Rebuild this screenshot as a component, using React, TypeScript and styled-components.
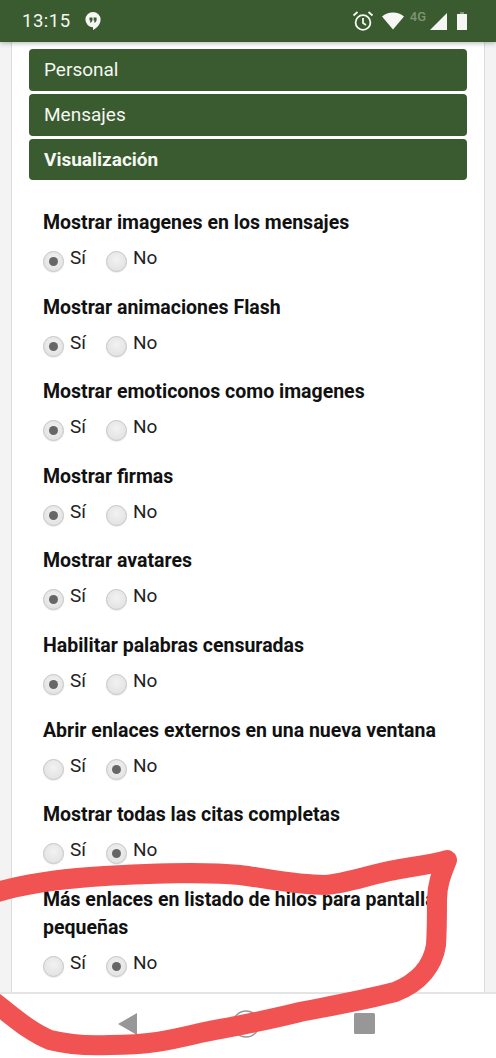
import React from "react";
import styled, { createGlobalStyle } from "styled-components";

const Global = createGlobalStyle`
  html, body { margin: 0; padding: 0; background: #fff; }
  #root { width: 496px; height: 1058px; }
`;
const Screen = styled.div`
  position: relative; width: 496px; height: 1058px; overflow: hidden;
  display: flex; flex-direction: column; background: #fff;
  font-family: Roboto, "Liberation Sans", sans-serif; color: #111;
`;
const StatusBar = styled.header`
  height: 42px; flex: none; background: #3a5a2f; display: flex; align-items: center;
  padding: 0 29px 0 22px; box-shadow: 0 1px 5px rgba(0,0,0,.3); position: relative; z-index: 1;
  color: #f4f6f2;
`;
const Clock = styled.span`
  font-size: 18.5px; font-weight: 400; letter-spacing: .5px; margin-right: 14px; line-height: 38px;
`;
const Spacer = styled.div`flex: 1;`;
const FourG = styled.span`
  font-size: 13px; font-weight: 500; color: #7f9576; margin: -8px 4px 0 6px; line-height: 14px;
`;
const Gutter = styled.main`
  flex: 1; background: #f3f3f3; padding: 0 11px; min-height: 0; overflow: hidden;
`;
const Panel = styled.div`
  height: 100%; box-sizing: border-box; background: #fff;
  border-left: 1px solid #dcdcdc; border-right: 1px solid #dcdcdc;
  padding: 7px 17px 0 17px;
`;
const Tabs = styled.nav`display: flex; flex-direction: column; gap: 3px;`;
const Tab = styled.div<{ $active?: boolean }>`
  height: ${p => (p.$active ? 41 : 42)}px; box-sizing: border-box; background: #3a5a2f; border-radius: 4px;
  color: #f5f7f3; font-size: 19px; line-height: 41px; padding-left: 15px;
  font-weight: ${p => (p.$active ? 700 : 400)};
`;
const Options = styled.section`
  display: flex; flex-direction: column; padding: 29px 0 0 14px;
`;
const Option = styled.div`height: 84.6px; flex: none;`;
const Label = styled.div`
  font-size: 19.5px; font-weight: 700; line-height: 28.5px; margin-right: -30px; color: #111;
`;
const Radios = styled.div`
  display: flex; align-items: center; margin-top: 7.5px; height: 28px;
`;
const RadioItem = styled.div`
  display: flex; align-items: center; margin-right: 15px;
`;
const RadioDot = styled.span<{ $on?: boolean }>`
  width: 21px; height: 21px; box-sizing: border-box; border-radius: 50%; flex: none;
  background: radial-gradient(circle at 50% 40%, #f2f2f2, #dedede);
  border: 1px solid #c4c4c4; box-shadow: 0 1px 1px rgba(0,0,0,.08);
  display: flex; align-items: center; justify-content: center; margin-top: 5px;
  &::after {
    content: ""; display: ${p => (p.$on ? "block" : "none")};
    width: 9px; height: 9px; border-radius: 50%; background: #666;
  }
`;
const RadioText = styled.span`
  font-size: 19px; line-height: 24px; margin-left: 6px; color: #222; width: 21px;
  margin-top: -2px;
`;
const NavBar = styled.footer`
  height: 66px; flex: none; box-sizing: border-box; background: #fff; border-top: 2px solid #e4e4e4;
  display: flex; align-items: flex-start; justify-content: center;
  padding-top: 19px; padding-right: 4px;
`;
const NavSlot = styled.div`
  width: 118px; height: 26px; display: flex; justify-content: center;
`;
const Scribble = styled.svg`
  position: absolute; left: 0; top: 0; pointer-events: none; z-index: 2;
`;

const OPTIONS: [string, boolean][] = [
  ["Mostrar imagenes en los mensajes", true],
  ["Mostrar animaciones Flash", true],
  ["Mostrar emoticonos como imagenes", true],
  ["Mostrar firmas", true],
  ["Mostrar avatares", true],
  ["Habilitar palabras censuradas", true],
  ["Abrir enlaces externos en una nueva ventana", false],
  ["Mostrar todas las citas completas", false],
];

const Choice = ({ yes }: { yes: boolean }) => (
  <Radios>
    <RadioItem><RadioDot $on={yes} /><RadioText>Sí</RadioText></RadioItem>
    <RadioItem><RadioDot $on={!yes} /><RadioText>No</RadioText></RadioItem>
  </Radios>
);

export default function App() {
  return (
    <Screen>
      <Global />
      <StatusBar>
        <Clock>13:15</Clock>
        <svg width="16" height="20" viewBox="0 0 16 20">
          <path fill="#f6f7f5" d="M8 1a7.6 7.6 0 0 0-7.6 7.6A7.6 7.6 0 0 0 8 16.2V19c3.6-1.8 7.6-5.4 7.6-10.4A7.6 7.6 0 0 0 8 1z" />
          <path fill="#3a5a2f" d="M4.5 6.5h3v3l-1.4 2H4.8l.8-2H4.5zM8.6 6.5h3v3l-1.4 2H8.9l.8-2H8.6z" />
        </svg>
        <Spacer />
        <svg width="24" height="24" viewBox="0 0 24 24" fill="none" stroke="#f4f6f2" strokeWidth="1.8">
          <circle cx="12" cy="13.5" r="7.4" />
          <path d="M12 9v5l3 2" />
          <path d="M2.5 6.5 6.5 3M21.5 6.5 17.5 3" />
        </svg>
        <svg width="22" height="18" viewBox="0 0 22 18" style={{ marginLeft: 7 }}>
          <path fill="#f6f7f5" d="M0 4.5C3 2 6.8.5 11 .5s8 1.5 11 4L11 17.5z" />
        </svg>
        <FourG>4G</FourG>
        <svg width="17" height="17" viewBox="0 0 18 18">
          <path fill="#f6f7f5" d="M0 18 18 0v18z" />
        </svg>
        <svg width="10" height="18" viewBox="0 0 10 18" style={{ marginLeft: 10 }}>
          <path fill="#7f9576" d="M3 0h4v2H3z" />
          <path fill="#f6f7f5" d="M0 2h10v16H0z" />
        </svg>
      </StatusBar>
      <Gutter>
        <Panel>
          <Tabs>
            <Tab>Personal</Tab>
            <Tab>Mensajes</Tab>
            <Tab $active>Visualización</Tab>
          </Tabs>
          <Options>
            {OPTIONS.map(([label, yes]) => (
              <Option key={label}>
                <Label>{label}</Label>
                <Choice yes={yes} />
              </Option>
            ))}
            <Option>
              <Label>Más enlaces en listado de hilos para pantallas<br />pequeñas</Label>
              <Choice yes={false} />
            </Option>
          </Options>
        </Panel>
      </Gutter>
      <NavBar>
        <NavSlot>
          <svg width="20" height="22" viewBox="0 0 20 22"><path fill="#979797" d="M19 0v22L0 11z" /></svg>
        </NavSlot>
        <NavSlot>
          <svg width="28" height="28" viewBox="0 0 28 28" style={{ marginTop: -3 }}><circle cx="14" cy="14" r="13" fill="none" stroke="#979797" strokeWidth="1.5" /></svg>
        </NavSlot>
        <NavSlot>
          <svg width="21" height="21" viewBox="0 0 21 21"><rect width="21" height="21" rx="1.5" fill="#979797" /></svg>
        </NavSlot>
      </NavBar>
      <Scribble width="496" height="1058" viewBox="0 0 496 1058">
        <path
          fill="none" stroke="#f05352" strokeWidth="20" strokeLinecap="round" strokeLinejoin="round"
          d="M-6 893C20 885 50 880 90 877C150 873 210 872 240 875C265 878 295 885 325 885C345 884 375 873 395 870C415 866 430 865 447 860C441 875 437 885 437 900C437 915 437 930 436 945C433 965 420 982 395 992C365 1000 325 1007 300 1012C260 1022 230 1027 200 1033C170 1040 150 1045 110 1045C90 1046 70 1045 50 1040C30 1032 15 1018 -6 1002"
        />
      </Scribble>
    </Screen>
  );
}
